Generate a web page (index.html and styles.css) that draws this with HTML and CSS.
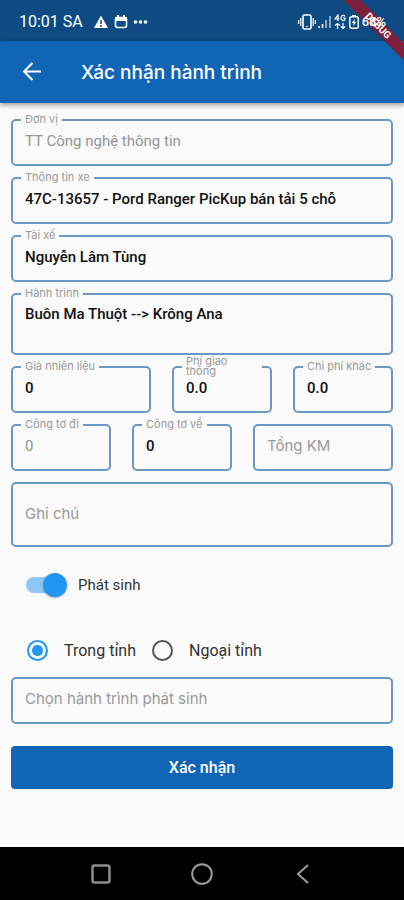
FILE: index.html
```html
<!DOCTYPE html>
<html lang="vi">

<head>
	<meta charset="utf-8">
	<meta name="viewport" content="width=device-width, initial-scale=1">
	<title>Xác nhận hành trình</title>
	<link rel="stylesheet" href="styles.css">
</head>

<body>
	<div class="debug-corner"><span class="debug-banner">DEBUG</span></div>
	<div class="status-bar">
		<span class="clock">10:01 SA</span>
		<svg width="16" height="16" viewBox="0 0 16 16">
			<path d="M8 1.500L15 14H1z" fill="#fff" />
			<path d="M8 6v4M8 11v2" stroke="#0d4b82" stroke-width="1.500" />
		</svg>
		<svg width="16" height="16" viewBox="0 0 16 16">
			<rect x="2.500" y="3.500" width="11" height="10" rx="2" fill="none" stroke="#fff" stroke-width="1.600" />
			<path d="M2 3h12v4H2zM4 1h2v3H4zM10 1h2v3h-2z" fill="#fff" />
		</svg>
		<svg width="16" height="16" viewBox="0 0 16 16" fill="#fff">
			<circle cx="2.500" cy="8" r="1.800" />
			<circle cx="7.500" cy="8" r="1.800" />
			<circle cx="12.500" cy="8" r="1.800" />
		</svg>
		<div class="status-right">
			<svg width="18" height="18" viewBox="0 0 18 18" fill="none" stroke="#fff">
				<rect x="5" y="2" width="8" height="14" rx="1.500" stroke-width="1.600" />
				<path d="M2.800 5v8M15.200 5v8M.7 7v4M17.300 7v4M8 13.500h2" stroke-width="1.200" />
			</svg>
			<svg width="16" height="16" viewBox="0 0 16 16" stroke="#fff" stroke-width="1.500">
				<path d="M2 12v2M5.500 10v4" />
				<path d="M9 6v8M13 2v12" opacity=".7" />
			</svg>
			<svg width="12" height="16" viewBox="0 0 12 16" fill="none" stroke="#fff" stroke-width="1.200">
				<path d="M4 7V1L1 5h4.500M11 2.500C9.500 .5 7 1.500 7 4s3 3.500 4 1.500V4H9" />
				<path d="M3.500 15V9.500M1 11.500l2.500-2 2.500 2M9 9v5.500M6.800 12.500l2.200 2 2.200-2" />
			</svg>
			<svg width="14" height="16" viewBox="0 0 14 16">
				<rect x="2.800" y="2.800" width="8.500" height="11.500" rx="2" fill="none" stroke="#fff" stroke-width="1.500" />
				<path d="M5 1h4v2H5zM7.800 5L4.800 9h1.800L6.200 12l3-4H7.400z" fill="#fff" />
			</svg>
			<span class="battery">68%</span>
		</div>
	</div>

	<header class="app-bar">
		<button class="back" type="button" aria-label="Quay lại">
			<svg width="24" height="24" viewBox="0 0 24 24" fill="none" stroke="#fff" stroke-width="2">
				<path d="M21 11.500H4.500M12.500 3L4 11.500l8.500 8.500" />
			</svg>
		</button>
		<h1>Xác nhận hành trình</h1>
	</header>

	<form class="trip-form">
		<div class="field">
			<label for="unit">Đơn vị</label>
			<input id="unit" type="text" value="TT Công nghệ thông tin" disabled>
		</div>
		<div class="field">
			<label for="car">Thông tin xe</label>
			<input id="car" type="text" value="47C-13657 - Pord Ranger PicKup bán tải 5 chỗ">
		</div>
		<div class="field">
			<label for="driver">Tài xế</label>
			<input id="driver" type="text" value="Nguyễn Lâm Tùng">
		</div>
		<div class="field">
			<label for="route">Hành trình</label>
			<textarea id="route" rows="2">Buôn Ma Thuột --&gt; Krông Ana</textarea>
		</div>

		<div class="row costs">
			<div class="field">
				<label for="fuel">Giá nhiên liệu</label>
				<input id="fuel" type="text" value="0">
			</div>
			<div class="field two-line">
				<label for="toll">Phí giao thông</label>
				<input id="toll" type="text" value="0.0">
			</div>
			<div class="field">
				<label for="other">Chi phí khác</label>
				<input id="other" type="text" value="0.0">
			</div>
		</div>

		<div class="row meters">
			<div class="field">
				<label for="km-out">Công tơ đi</label>
				<input id="km-out" type="text" value="0" disabled>
			</div>
			<div class="field">
				<label for="km-back">Công tơ về</label>
				<input id="km-back" type="text" value="0">
			</div>
			<div class="field">
				<input id="km-total" type="text" placeholder="Tổng KM" aria-label="Tổng KM">
			</div>
		</div>

		<div class="field">
			<textarea class="note" rows="2" placeholder="Ghi chú" aria-label="Ghi chú"></textarea>
		</div>

		<div class="switch-row">
			<input class="switch" id="extra" type="checkbox" role="switch" checked>
			<label for="extra">Phát sinh</label>
		</div>

		<div class="extra-trip">
			<div class="radio-row">
				<input id="inside" type="radio" name="area" checked>
				<label for="inside">Trong tỉnh</label>
				<input id="outside" type="radio" name="area">
				<label for="outside">Ngoại tỉnh</label>
			</div>
			<div class="field">
				<input type="text" placeholder="Chọn hành trình phát sinh" aria-label="Chọn hành trình phát sinh">
			</div>
		</div>

		<button class="submit" type="submit">Xác nhận</button>
	</form>

	<nav class="system-nav">
		<button type="button" aria-label="Gần đây">
			<svg width="24" height="24" viewBox="0 0 24 24" fill="none" stroke="#8c8c8c" stroke-width="2.500">
				<rect x="3.500" y="3.500" width="17" height="17" rx="2" />
			</svg>
		</button>
		<button type="button" aria-label="Trang chủ">
			<svg width="24" height="24" viewBox="0 0 24 24" fill="none" stroke="#9c9c9c" stroke-width="2">
				<circle cx="12" cy="12" r="9.800" />
			</svg>
		</button>
		<button type="button" aria-label="Trở về">
			<svg width="24" height="24" viewBox="0 0 24 24" fill="none" stroke="#9c9c9c" stroke-width="2">
				<path d="M17 3L7 12l10 9" />
			</svg>
		</button>
	</nav>
</body>

</html>
```
FILE: styles.css
```css
* {
	box-sizing: border-box;
}

body {
	display: flex;
	flex-direction: column;
	min-height: 100vh;
	margin: 0;
	background-color: #fafafa;
	font-family: Roboto, sans-serif;
	color: #333;
}

button {
	border: none;
	padding: 0;
	background: none;
	font-family: inherit;
}

svg {
	display: block;
	flex: none;
}

.status-bar {
	display: flex;
	align-items: center;
	gap: 4px;
	height: 41px;
	padding: 2px 18px 0 19px;
	background-color: #0d4b82;
	color: #fff;
}

.clock {
	margin-right: 6px;
	font-size: 16px;
}

.status-right {
	position: relative;
	z-index: 2;
	display: flex;
	align-items: center;
	gap: 1px;
	margin-left: auto;
}

.battery {
	font-size: 13px;
	font-weight: 500;
}

.debug-corner {
	position: absolute;
	z-index: 1;
	top: 0;
	right: 0;
	width: 64px;
	height: 64px;
	overflow: hidden;
}

.debug-banner {
	position: absolute;
	top: 20px;
	right: -34px;
	width: 120px;
	background-color: #7c1f3a;
	color: #fff;
	font-size: 10px;
	font-weight: 700;
	line-height: 12px;
	text-align: center;
	transform: rotate(45deg);
}

.app-bar {
	display: flex;
	align-items: center;
	gap: 37px;
	height: 62px;
	padding: 0 20px;
	background-color: #1165b5;
	color: #fff;
	box-shadow: 0 2px 5px rgba(0, 0, 0, 0.4);
}

h1 {
	margin: 0;
	font-family: Inter, sans-serif;
	font-size: 19px;
	font-weight: 500;
}

.trip-form {
	display: flex;
	flex: 1;
	flex-direction: column;
	gap: 11px;
	padding: 16px 11px;
}

.row {
	display: grid;
	gap: 21px;
}

.costs {
	grid-template-columns: 7fr 5fr 5fr;
}

.meters {
	grid-template-columns: 5fr 5fr 7fr;
}

.field {
	position: relative;
	min-width: 0;
}

.field label {
	position: absolute;
	top: -7px;
	left: 10px;
	padding: 0 4px;
	background-color: #fafafa;
	color: #999;
	font-family: Inter, sans-serif;
	font-size: 11px;
	line-height: 14px;
}

.two-line label {
	top: -10px;
	right: 10px;
	padding-right: 20px;
	line-height: 10px;
}

.field input,
.field textarea {
	display: block;
	width: 100%;
	border: 2px solid #6b97c4;
	border-radius: 5px;
	padding: 0 12px;
	background: none;
	color: #111;
	font-family: Roboto, sans-serif;
	font-size: 15px;
	font-weight: 500;
	line-height: 20px;
	resize: none;
}

.field input {
	height: 47px;
	padding-bottom: 4px;
}

.field textarea {
	height: 62px;
	padding-top: 9px;
	overflow: hidden;
}

.field .note {
	height: 65px;
	padding-top: 20px;
}

.field input:disabled {
	color: #949494;
	font-weight: 400;
}

.field ::placeholder {
	color: #999;
	font-family: Inter, sans-serif;
	font-size: 15px;
	font-weight: 400;
}

.switch-row,
.radio-row {
	display: flex;
	align-items: center;
	height: 54px;
}

.switch-row {
	gap: 12px;
	padding-left: 15px;
	font-size: 15px;
}

.switch {
	position: relative;
	appearance: none;
	width: 40px;
	height: 16px;
	margin: 0;
	border-radius: 8px;
	background-color: #8ec6f6;
}

.switch::after {
	content: "";
	position: absolute;
	top: -4px;
	right: -1px;
	width: 24px;
	height: 24px;
	border-radius: 50%;
	background-color: #2196f3;
	box-shadow: 0 1px 2px rgba(0, 0, 0, 0.3);
}

.radio-row {
	font-size: 16px;
}

.radio-row input {
	appearance: none;
	width: 21px;
	height: 21px;
	margin: 0 16px;
	border: 2px solid #555;
	border-radius: 50%;
}

.radio-row input:checked {
	border-color: #2196f3;
	background: radial-gradient(circle, #2196f3 5px, transparent 6px);
}

.submit {
	height: 43px;
	margin-top: 11px;
	border-radius: 4px;
	background-color: #1165b5;
	color: #fff;
	font-size: 16px;
	font-weight: 500;
}

.system-nav {
	display: grid;
	grid-template-columns: repeat(3, 1fr);
	height: 53px;
	padding: 0 50px;
	background-color: #000;
}

.system-nav button {
	display: flex;
	align-items: center;
	justify-content: center;
}
```
